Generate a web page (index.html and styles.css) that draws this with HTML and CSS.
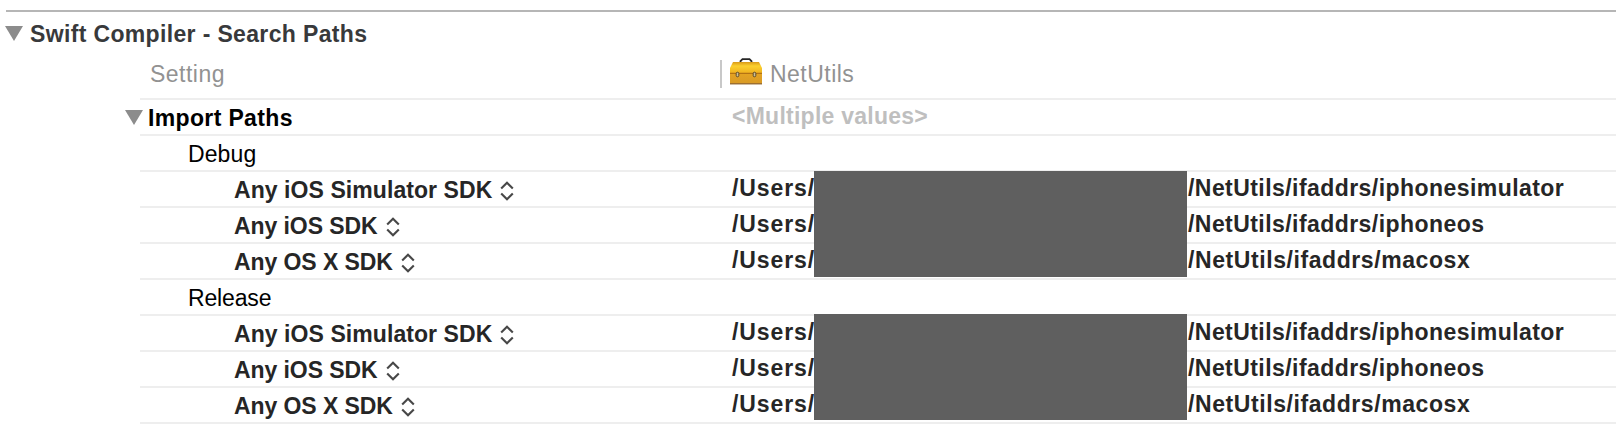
FILE: index.html
```html
<!DOCTYPE html>
<html lang="en">
<head>
<meta charset="utf-8">
<title>Build Settings</title>
<link rel="stylesheet" href="styles.css">
</head>
<body>
<svg class="defs" width="0" height="0" aria-hidden="true">
  <symbol id="tri" viewBox="0 0 18 15"><path d="M0 0H18L9 15Z" fill="#8c8c8c"/></symbol>
  <symbol id="updown" viewBox="0 0 14 20"><path d="M1.2 7.6L7 1.7L12.8 7.6M1.2 12.4L7 18.3L12.8 12.4" fill="none" stroke="#484848" stroke-width="2.1"/></symbol>
</svg>
<main class="settings">
  <h1 class="section"><svg class="tri"><use href="#tri"/></svg><span>Swift Compiler - Search Paths</span></h1>
  <div class="table">
    <div class="head">
      <div class="head-setting">Setting</div>
      <div class="head-target">
        <svg class="toolbox" viewBox="0 0 32 27">
          <defs>
            <linearGradient id="lid" x2="0" y2="1"><stop offset="0" stop-color="#d99a18"/><stop offset=".35" stop-color="#fbd02f"/><stop offset="1" stop-color="#efb01f"/></linearGradient>
            <linearGradient id="box" x2="0" y2="1"><stop offset="0" stop-color="#e5a422"/><stop offset="1" stop-color="#d89a26"/></linearGradient>
          </defs>
          <path d="M10.500 5V3.200L12.500 1.200H19.500L21.500 3.200V5" fill="none" stroke="#262626" stroke-width="1.800"/>
          <path d="M3 4H29L32 10V15.500H0V10Z" fill="url(#lid)"/>
          <path d="M0 15H32V25.500H0Z" fill="url(#box)"/>
          <path d="M0 15.300H32" stroke="#a86712" stroke-width="1"/>
          <path d="M0 25.800H32" stroke="#8a5818" stroke-width="1.200"/>
          <rect x="6.200" y="14.200" width="2.600" height="4.600" rx="1.300" fill="#c9bf9c" stroke="#5c4a25" stroke-width="1"/>
          <rect x="23.200" y="14.200" width="2.600" height="4.600" rx="1.300" fill="#c9bf9c" stroke="#5c4a25" stroke-width="1"/>
        </svg>
        <span>NetUtils</span>
      </div>
    </div>
    <div class="row setting"><div class="name"><svg class="tri"><use href="#tri"/></svg><span>Import Paths</span></div><div class="value multiple">&lt;Multiple values&gt;</div></div>
    <div class="row config"><div class="name">Debug</div></div>
    <div class="group debug">
      <div class="row"><div class="name simulator"><span>Any iOS Simulator SDK</span><svg class="updown"><use href="#updown"/></svg></div><div class="value"><span class="root">/Users/</span><span class="tail">/NetUtils/ifaddrs/iphonesimulator</span></div></div>
      <div class="row"><div class="name"><span>Any iOS SDK</span><svg class="updown"><use href="#updown"/></svg></div><div class="value"><span class="root">/Users/</span><span class="tail">/NetUtils/ifaddrs/iphoneos</span></div></div>
      <div class="row"><div class="name"><span>Any OS X SDK</span><svg class="updown"><use href="#updown"/></svg></div><div class="value"><span class="root">/Users/</span><span class="tail mac">/NetUtils/ifaddrs/macosx</span></div></div>
      <div class="redaction"></div>
    </div>
    <div class="row config"><div class="name release-name">Release</div></div>
    <div class="group release">
      <div class="row"><div class="name simulator"><span>Any iOS Simulator SDK</span><svg class="updown"><use href="#updown"/></svg></div><div class="value"><span class="root">/Users/</span><span class="tail">/NetUtils/ifaddrs/iphonesimulator</span></div></div>
      <div class="row"><div class="name"><span>Any iOS SDK</span><svg class="updown"><use href="#updown"/></svg></div><div class="value"><span class="root">/Users/</span><span class="tail">/NetUtils/ifaddrs/iphoneos</span></div></div>
      <div class="row"><div class="name"><span>Any OS X SDK</span><svg class="updown"><use href="#updown"/></svg></div><div class="value"><span class="root">/Users/</span><span class="tail mac">/NetUtils/ifaddrs/macosx</span></div></div>
      <div class="redaction"></div>
    </div>
  </div>
</main>
</body>
</html>
```
FILE: styles.css
```css
* { box-sizing: border-box; }
body { margin: 0; background: #fff; color: #262626; font: 23px/32px "Liberation Sans", Arial, sans-serif; white-space: nowrap; overflow: hidden; }
svg { display: block; flex: none; }
.defs { position: absolute; }
.settings { margin: 10px 0 0 6px; border-top: 2px solid #b6b6b6; }
.section { display: flex; gap: 7px; height: 42px; margin: 0 0 0 -1px; padding-top: 6px; color: #38393b; font-size: 23px; font-weight: 700; letter-spacing: .35px; }
.tri { width: 18px; height: 15px; margin-top: 8px; }
.table { margin-left: 134px; }
.head { display: grid; grid-template-columns: 580px 1fr; height: 46px; border-bottom: 2px solid #eeeeee; color: #929292; letter-spacing: .48px; }
.head-setting { padding: 4px 0 0 10px; }
.head-target { display: flex; height: 28px; margin-top: 6px; border-left: 2px solid #c8c8c8; padding-left: 8px; gap: 8px; line-height: 28px; }
.toolbox { width: 32px; height: 27px; margin-top: -2px; }
.row { display: grid; grid-template-columns: 592px 1fr; height: 36px; border-bottom: 2px solid #eeeeee; font-weight: 700; letter-spacing: -.08px; }
.name { display: flex; gap: 8px; padding: 2px 0 0 94px; }
.simulator { letter-spacing: .07px; }
.value { display: flex; }
.setting .name { gap: 5px; margin-left: -15px; padding-left: 0; color: #000; letter-spacing: .35px; }
.multiple { color: #bfbfbf; letter-spacing: .25px; }
.config .name { padding-left: 48px; color: #000; font-weight: 400; letter-spacing: .1px; }
.config .release-name { letter-spacing: -.15px; }
.updown { width: 14px; height: 20px; margin-top: 7px; }
.root { width: 456px; letter-spacing: .9px; }
.tail { letter-spacing: .44px; }
.mac { letter-spacing: .58px; }
.group { position: relative; }
.redaction { position: absolute; left: 674px; width: 373px; height: 106px; background: #5f5f5f; }
.debug .redaction { top: -1px; }
.release .redaction { top: -2px; }
```
